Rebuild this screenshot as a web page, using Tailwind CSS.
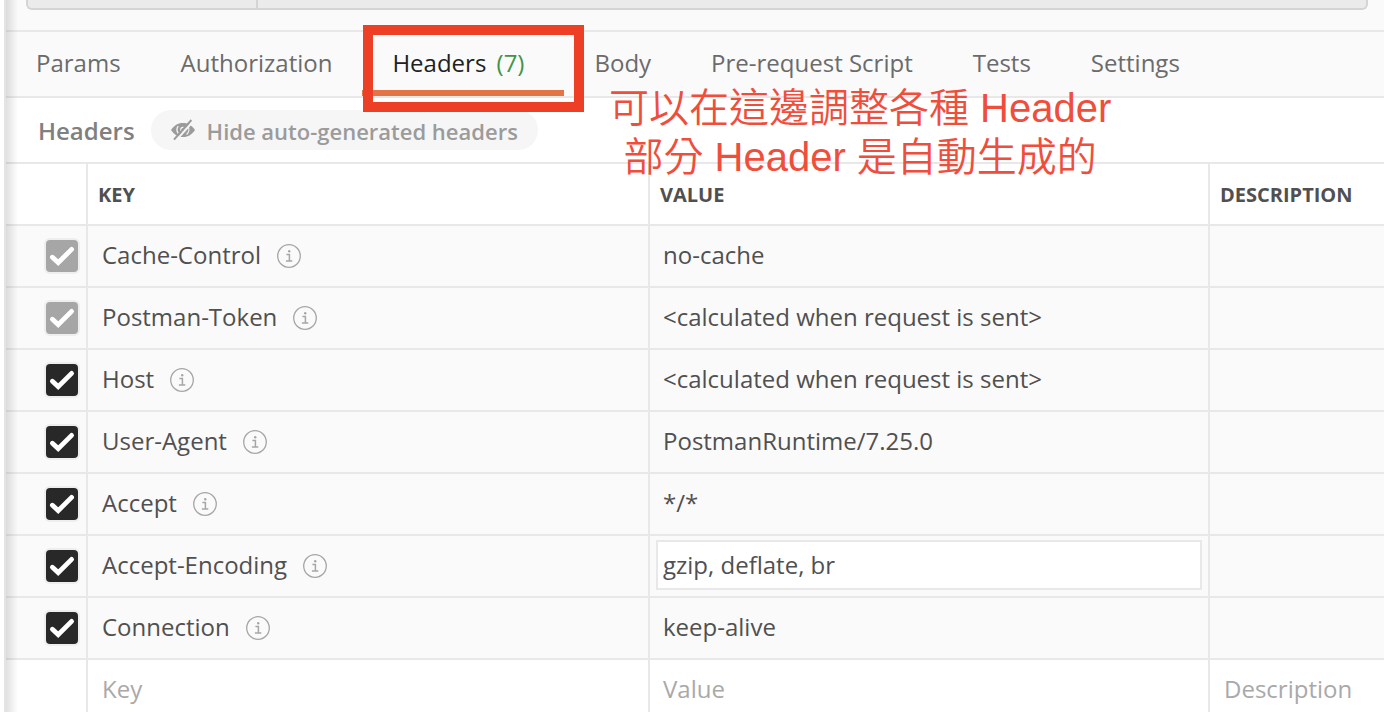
<!DOCTYPE html>
<html lang="zh-Hant">
<head>
<meta charset="utf-8">
<title>Request headers</title>
<script src="https://cdn.jsdelivr.net/npm/@tailwindcss/browser@4"></script>
</head>
<body class="h-screen overflow-hidden bg-white font-['Open_Sans',sans-serif] text-2xl text-[#505050]">
<svg class="hidden" aria-hidden="true">
  <symbol id="info" viewBox="0 0 24 24">
    <circle cx="12" cy="12" r="11.3" fill="none" stroke="#a6a6a6" stroke-width="1.3"/>
    <path d="M9.4 10.6h3v6.4M8.9 17h6.4" fill="none" stroke="#a6a6a6" stroke-width="1.5"/>
    <circle cx="12.2" cy="7.2" r="1.2" fill="#a6a6a6"/>
  </symbol>
  <symbol id="check" viewBox="0 0 32 32">
    <path d="M6.4 17.2L12.2 22.6L25.6 9.4" fill="none" stroke="#fff" stroke-width="4.8" stroke-linecap="round" stroke-linejoin="miter"/>
  </symbol>
</svg>
<div class="relative flex min-h-full">
  <div class="w-1.5 shrink-0 border-r-2 border-[#e4e4e4]"></div>
  <main class="relative min-w-0 flex-1">
    <div class="pointer-events-none absolute inset-y-0 left-0 z-10 w-3 bg-linear-to-r from-black/12 to-transparent"></div>

    <div class="flex h-8 items-start border-b-2 border-[#e8e8e8] bg-[#fafafa] pr-4 pl-5">
      <div class="flex h-2.5 flex-1 rounded-b-md border-2 border-t-0 border-[#d4d4d4] bg-[#ebebeb]">
        <div class="w-[230px] border-r-2 border-[#d4d4d4]"></div>
      </div>
    </div>

    <nav class="flex h-[66px] border-b-2 border-[#e8e8e8] bg-[#fafafa] whitespace-nowrap text-[#6b6b6b]">
      <button class="px-[30px] pb-0.5">Params</button>
      <button class="px-[30px] pb-0.5">Authorization</button>
      <button class="relative pr-10 pb-0.5 pl-[30px] text-[#212121]">Headers <span class="ml-1 text-[#439446]">(7)</span><span class="absolute inset-x-0 bottom-0 h-1.5 bg-[#e27446]"></span></button>
      <button class="px-[30px] pb-0.5">Body</button>
      <button class="px-[30px] pb-0.5">Pre-request Script</button>
      <button class="px-[30px] pb-0.5">Tests</button>
      <button class="px-[30px] pb-0.5">Settings</button>
    </nav>

    <div class="flex h-16 items-center gap-4 pl-8 whitespace-nowrap">
      <h2 class="pt-0.5 font-semibold text-[#808080]">Headers</h2>
      <button class="flex h-10 items-center gap-3 rounded-full bg-[#f6f6f6] px-5 text-[22px] font-semibold text-[#9b9b9b]">
        <svg class="h-6 w-6" viewBox="0 0 24 24" fill="none" aria-hidden="true">
          <path d="M0 12C4 6.2 8 5 12 5S20 6.2 24 12C20 17.8 16 19 12 19S4 17.8 0 12Z" fill="#9b9b9b"/>
          <path d="M7.2 8.2A6.2 6.2 0 0 0 7.2 15.4M16.8 8.2A6.2 6.2 0 0 1 15.6 16.4" stroke="#f6f6f6" stroke-width="1.3"/>
          <circle cx="12" cy="11.5" r="2.2" stroke="#f6f6f6" stroke-width="1.2"/>
          <path d="M4.4 23.2L22.4 3" stroke="#f6f6f6" stroke-width="2"/>
          <path d="M3 21.6L20.4 2" stroke="#9b9b9b" stroke-width="2"/>
        </svg>
        <span class="pt-1">Hide auto-generated headers</span>
      </button>
    </div>

    <table class="block border-t-2 border-[#e8e8e8] whitespace-nowrap">
      <thead class="block text-left text-xl font-bold">
        <tr class="grid h-[62px] grid-cols-[82px_562fr_560fr_174fr] border-b-2 border-[#e8e8e8]">
          <th class="border-r-2 border-[#e8e8e8]"></th>
          <th class="flex items-center border-r-2 border-[#e8e8e8] pt-0.5 pl-2.5">KEY</th>
          <th class="flex items-center border-r-2 border-[#e8e8e8] pt-0.5 pl-2.5">VALUE</th>
          <th class="flex items-center pt-0.5 pl-2.5">DESCRIPTION</th>
        </tr>
      </thead>
      <tbody class="block" id="rows"></tbody>
    </table>

    <div class="pointer-events-none absolute top-[25px] left-[357px] h-[87px] w-[221px] border-10 border-[#ed3f25]"></div>
    <p class="pointer-events-none absolute top-[84px] left-[603px] text-center font-['Liberation_Sans','Noto_Sans_CJK_TC',sans-serif] text-[40px] leading-[49px] font-[350] whitespace-nowrap text-[#f04e3c]">可以在這邊調整各種 Header<br>部分 Header 是自動生成的</p>
  </main>
</div>
<script>
  const rows = [
    ["Cache-Control", "no-cache", true],
    ["Postman-Token", "&lt;calculated when request is sent&gt;", true],
    ["Host", "&lt;calculated when request is sent&gt;"],
    ["User-Agent", "PostmanRuntime/7.25.0"],
    ["Accept", "*/*"],
    ["Accept-Encoding", "gzip, deflate, br"],
    ["Connection", "keep-alive"],
  ];
  const line = "grid h-[62px] grid-cols-[82px_562fr_560fr_174fr] border-b-2 border-[#e8e8e8]";
  const cell = "flex min-w-0 items-center border-r-2 border-[#e8e8e8]";
  const field = "w-full bg-transparent pb-0.5 outline-none placeholder:text-[#a9a9a9]";
  document.getElementById("rows").innerHTML = rows.map(([key, value, locked]) => `
    <tr class="${line} bg-[#fafafa]">
      <td class="${cell} justify-end pr-2">
        <label class="relative h-8 w-8 rounded-sm ring-2 ring-[#eeeeee]">
          <input type="checkbox" checked ${locked ? "disabled" : ""} aria-label="${key}" class="block h-8 w-8 appearance-none rounded-sm bg-[#282828] disabled:bg-[#a6a6a6]">
          <svg class="pointer-events-none absolute inset-0 h-8 w-8"><use href="#check"/></svg>
        </label>
      </td>
      <td class="${cell} gap-4 pl-3.5"><span class="pb-0.5">${key}</span><button aria-label="About ${key}"><svg class="h-6 w-6"><use href="#info"/></svg></button></td>
      <td class="${cell} px-1.5 pb-0.5">${key === "Accept-Encoding"
        ? `<input aria-label="${key} value" value="${value}" class="h-[50px] w-full border-2 border-[#e8e8e8] bg-white pb-0.5 pl-[5px] outline-none">`
        : `<span class="pl-[7px]">${value}</span>`}</td>
      <td></td>
    </tr>`).join("") + `
    <tr class="${line} bg-white">
      <td class="${cell}"></td>
      <td class="${cell} pl-3.5"><input aria-label="Key" placeholder="Key" class="${field}"></td>
      <td class="${cell} pl-[13px]"><input aria-label="Value" placeholder="Value" class="${field}"></td>
      <td class="flex min-w-0 items-center pl-3.5"><input aria-label="Description" placeholder="Description" class="${field}"></td>
    </tr>`;
</script>
</body>
</html>
